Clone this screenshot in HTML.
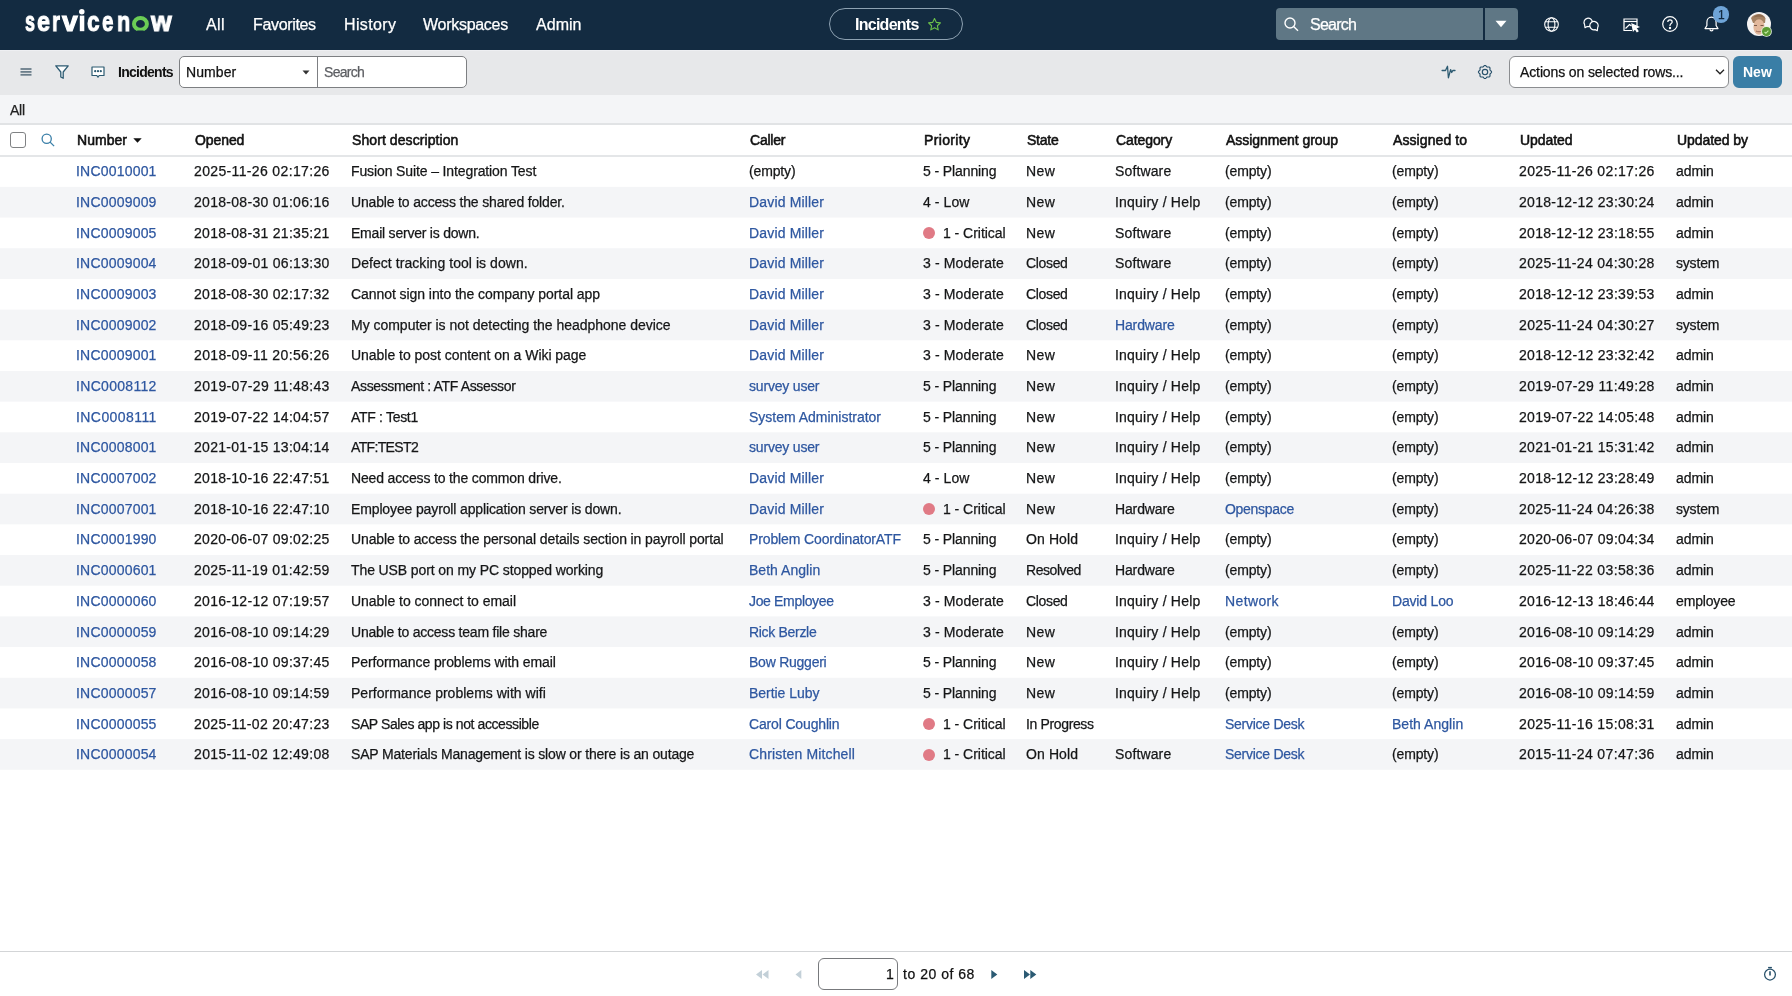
<!DOCTYPE html><html><head><meta charset="utf-8"><style>
html,body{margin:0;padding:0;}
body{width:1792px;height:996px;overflow:hidden;position:relative;background:#fff;font-family:"Liberation Sans",sans-serif;color:#151617;}
.t{position:absolute;white-space:pre;will-change:transform;-webkit-text-stroke:0.25px currentColor;}
.sb{-webkit-text-stroke:0.55px currentColor;}
.bd{-webkit-text-stroke:0;}
.b{position:absolute;box-sizing:border-box;}
svg{position:absolute;overflow:visible;}
</style></head><body>
<div class="b" style="left:0;top:0;width:1792px;height:50px;background:#132b41"></div>
<div class="t" style="left:24.75px;top:8.00px;font-size:28px;line-height:28px;font-weight:bold;color:#fff;-webkit-text-stroke:1.1px #fff;transform:scaleX(0.636);transform-origin:0 0">s</div>
<div class="t" style="left:36.85px;top:8.00px;font-size:28px;line-height:28px;font-weight:bold;color:#fff;-webkit-text-stroke:1.1px #fff;transform:scaleX(0.835);transform-origin:0 0">e</div>
<div class="t" style="left:52.45px;top:8.00px;font-size:28px;line-height:28px;font-weight:bold;color:#fff;-webkit-text-stroke:1.1px #fff;transform:scaleX(0.734);transform-origin:0 0">r</div>
<div class="t" style="left:62.25px;top:8.00px;font-size:28px;line-height:28px;font-weight:bold;color:#fff;-webkit-text-stroke:1.1px #fff;transform:scaleX(1.008);transform-origin:0 0">v</div>
<div class="t" style="left:86.55px;top:8.00px;font-size:28px;line-height:28px;font-weight:bold;color:#fff;-webkit-text-stroke:1.1px #fff;transform:scaleX(0.803);transform-origin:0 0">c</div>
<div class="t" style="left:102.25px;top:8.00px;font-size:28px;line-height:28px;font-weight:bold;color:#fff;-webkit-text-stroke:1.1px #fff;transform:scaleX(0.732);transform-origin:0 0">e</div>
<div class="t" style="left:116.95px;top:8.00px;font-size:28px;line-height:28px;font-weight:bold;color:#fff;-webkit-text-stroke:1.1px #fff;transform:scaleX(0.772);transform-origin:0 0">n</div>
<div class="t" style="left:150.53px;top:8.00px;font-size:28px;line-height:28px;font-weight:bold;color:#fff;-webkit-text-stroke:1.1px #fff;transform:scaleX(0.949);transform-origin:0 0">w</div>
<svg style="left:78px;top:8px" width="8" height="24" viewBox="0 0 8 24" fill="#fff"><circle cx="3.8" cy="3.8" r="2.75"/><rect x="1.8" y="7.6" width="4.5" height="15.6"/></svg>
<svg style="left:132px;top:15.6px" width="18" height="16" viewBox="0 0 18 16"><ellipse cx="8.45" cy="7.9" rx="6.45" ry="5.9" fill="none" stroke="#6bcd55" stroke-width="4"/><rect x="4.9" y="14.5" width="7.1" height="2" rx="0.8" fill="#132b41"/></svg>
<div class="t" style="left:205.80px;top:16.60px;font-size:16px;line-height:16px;letter-spacing:0.362px;color:#fff;">All</div>
<div class="t" style="left:252.70px;top:16.60px;font-size:16px;line-height:16px;letter-spacing:-0.337px;color:#fff;">Favorites</div>
<div class="t" style="left:343.60px;top:16.60px;font-size:16px;line-height:16px;letter-spacing:0.354px;color:#fff;">History</div>
<div class="t" style="left:423.40px;top:16.60px;font-size:16px;line-height:16px;letter-spacing:-0.281px;color:#fff;">Workspaces</div>
<div class="t" style="left:536.20px;top:16.60px;font-size:16px;line-height:16px;letter-spacing:0.035px;color:#fff;">Admin</div>
<div class="b" style="left:829px;top:8px;width:134px;height:32px;border:1px solid #8ea2b2;border-radius:16px"></div>
<div class="t bd" style="left:854.80px;top:16.50px;font-size:16px;line-height:16px;letter-spacing:-0.742px;font-weight:bold;color:#fff;">Incidents</div>
<svg style="left:927px;top:17px" width="15" height="15" viewBox="0 0 24 24"><path d="M12 2.5l2.9 6.1 6.6.8-4.9 4.6 1.3 6.6L12 17.3l-5.9 3.3 1.3-6.6-4.9-4.6 6.6-.8z" fill="none" stroke="#6cc24a" stroke-width="1.8" stroke-linejoin="round"/></svg>
<div class="b" style="left:1276px;top:8px;width:242px;height:32px;background:#5f7785;border-radius:4px"></div>
<div class="b" style="left:1483px;top:8px;width:1.5px;height:32px;background:#132b41"></div>
<svg style="left:1284px;top:17px" width="15" height="14" viewBox="0 0 15 14"><circle cx="6" cy="6" r="5" fill="none" stroke="#fff" stroke-width="1.4"/><path d="M9.6 9.6L14 13.8" stroke="#fff" stroke-width="1.4"/></svg>
<div class="t" style="left:1310.30px;top:16.75px;font-size:16px;line-height:16px;letter-spacing:-0.758px;color:#fff;">Search</div>
<svg style="left:1495px;top:20px" width="12" height="8" viewBox="0 0 12 8"><path d="M0.5 0.8h11L6 7.3z" fill="#fff"/></svg>
<svg style="left:1543.5px;top:16.5px" width="15" height="15" viewBox="0 0 15 15" fill="none" stroke="#fff" stroke-width="1.1"><circle cx="7.5" cy="7.5" r="6.8"/><ellipse cx="7.5" cy="7.5" rx="3.4" ry="6.8"/><path d="M1.3 4.8h12.4M1.3 10.2h12.4"/></svg>
<svg style="left:1583px;top:17.5px" width="17" height="14" viewBox="0 0 17 14" fill="none" stroke="#fff" stroke-width="1.2" stroke-linejoin="round"><path d="M4.11 8.46L2.0 9.7L1.56 6.5A4.2 4.2 0 1 1 4.11 8.46z"/><path d="M12.09 11.66L14.3 12.7L14.64 9.7A4.2 4.2 0 1 0 12.09 11.66z" fill="#132b41"/></svg>
<svg style="left:1623px;top:18px" width="17" height="15" viewBox="0 0 17 15" fill="none" stroke="#fff" stroke-width="1.2"><path d="M9 12.5H1V1h13v7"/><path d="M1 3.5h13"/><path d="M2.5 10.5l4-4 2 1.5"/><path d="M9 6l6.5 3-2.5 1 2 3-1 .7-2-3-1.7 2z" fill="#fff"/></svg>
<svg style="left:1662px;top:16px" width="16" height="16" viewBox="0 0 16 16" fill="none" stroke="#fff" stroke-width="1.2"><circle cx="8" cy="8" r="7.3"/><path d="M5.8 6.1c0-1.3 1-2.2 2.2-2.2s2.2.9 2.2 2.1c0 1.5-2.2 1.7-2.2 3.4v.6"/><circle cx="8" cy="12" r=".6" fill="#fff"/></svg>
<svg style="left:1704px;top:16px" width="15" height="16" viewBox="0 0 15 16" fill="none" stroke="#fff" stroke-width="1.2" stroke-linejoin="round"><path d="M7.5 1.2c-2.8 0-4.6 2.2-4.6 5v3.3L1 12.6h13l-1.9-3.1V6.2c0-2.8-1.8-5-4.6-5z"/><path d="M6 13.2c0 .9.7 1.6 1.5 1.6S9 14.1 9 13.2"/></svg>
<div class="b" style="left:1712.5px;top:6px;width:16.5px;height:16.5px;border-radius:50%;background:#6fa5d8"></div>
<div class="t" style="left:1717.50px;top:9.30px;font-size:12px;line-height:12px;letter-spacing:0.000px;color:#132b41;">1</div>
<svg style="left:1747px;top:12px" width="24" height="24" viewBox="0 0 24 24"><defs><clipPath id="av"><circle cx="12" cy="12" r="12"/></clipPath></defs><g clip-path="url(#av)"><rect width="24" height="24" fill="#f6f4f3"/><path d="M4 6c2-3 5-4 8-4s5.5 1.5 6.5 4.5L18 11H6z" fill="#a58263"/><ellipse cx="12" cy="15" rx="5.6" ry="7.8" fill="#e2b89c"/><path d="M7 13.5h3M13.5 13.5h3" stroke="#7a5a48" stroke-width="1"/><path d="M9 19c1.5 1 4.5 1 6 0" stroke="#9a6a58" stroke-width="1" fill="none"/><path d="M6.5 5.5c1.5-2 3.5-3 5.5-3s4.5 1 5.8 3.5c-1.5-1-3.5-1.3-5.8-1.3S8 5 6.5 5.5z" fill="#8e6c50"/></g></svg>
<div class="b" style="left:1762.4px;top:27.4px;width:8.4px;height:8.4px;border-radius:50%;background:#5d9c34;box-shadow:0 0 0 0.8px #e8f3e0"></div>
<svg style="left:1764.2px;top:29.6px" width="5" height="4" viewBox="0 0 5 4"><path d="M0.6 2l1.3 1.3L4.4 0.7" fill="none" stroke="#c9f0a8" stroke-width="1.1"/></svg>
<div class="b" style="left:0;top:50px;width:1792px;height:45px;background:#e7e8ea"></div>
<div class="b" style="left:0;top:50px;width:1792px;height:1px;background:#eeeff2"></div>
<svg style="left:20px;top:68px" width="12" height="9" viewBox="0 0 12 9" fill="#6b7e8b"><rect x="0.5" y="0.1" width="11" height="1.8"/><rect x="0.5" y="3.0" width="11" height="1.8"/><rect x="0.5" y="5.9" width="11" height="1.8"/></svg>
<svg style="left:55px;top:65px" width="14" height="14" viewBox="0 0 14 14" fill="#fafcfd" stroke="#2c5a71" stroke-width="1.3" stroke-linejoin="round"><path d="M0.8 0.8h12.4L8.2 7v6.3L5.8 12V7z"/></svg>
<svg style="left:91px;top:66px" width="14" height="13" viewBox="0 0 14 13" fill="#fff" stroke="#2c5a71" stroke-width="1.2" stroke-linejoin="round"><path d="M1 1h12v8.5H8.2L7 11.2 5.8 9.5H1z"/><circle cx="4.2" cy="5.2" r=".5" fill="#2c5a71"/><circle cx="7" cy="5.2" r=".5" fill="#2c5a71"/><circle cx="9.8" cy="5.2" r=".5" fill="#2c5a71"/></svg>
<div class="t bd" style="left:118.40px;top:64.80px;font-size:14px;line-height:14px;letter-spacing:-0.732px;font-weight:bold;color:#111;">Incidents</div>
<div class="b" style="left:179px;top:56px;width:288px;height:32px;border:1px solid #7d7f82;border-radius:5px;background:#fff"></div>
<div class="b" style="left:317px;top:56px;width:1px;height:32px;background:#7d7f82"></div>
<div class="t" style="left:186.40px;top:65.20px;font-size:14px;line-height:14px;letter-spacing:0.080px;color:#111;">Number</div>
<svg style="left:302px;top:70px" width="8" height="5" viewBox="0 0 8 5"><path d="M0.5 0.5h7L4 4.5z" fill="#333"/></svg>
<div class="t" style="left:324.00px;top:65.20px;font-size:14px;line-height:14px;letter-spacing:-0.690px;color:#5c5e62;">Search</div>
<svg style="left:1441px;top:65px" width="15" height="14" viewBox="0 0 15 14" fill="none" stroke="#2c5a71" stroke-width="1.3" stroke-linejoin="round" stroke-linecap="round"><path d="M1.1 5.5H4.5L6.5 1.3L7.4 12.8L9.6 4.6L10.7 7.5L11.8 5.5H14"/></svg>
<svg style="left:1476.7px;top:64px" width="16" height="16" viewBox="0 0 16 16" fill="none" stroke="#27506a" stroke-width="1.15"><path d="M14.55 8.00 L14.52 8.26 L14.43 8.51 L14.28 8.74 L14.09 8.97 L13.88 9.17 L13.67 9.36 L13.46 9.54 L13.28 9.72 L13.14 9.90 L13.04 10.09 L12.97 10.29 L12.95 10.52 L12.95 10.77 L12.97 11.05 L12.99 11.33 L12.99 11.63 L12.97 11.91 L12.90 12.19 L12.79 12.43 L12.63 12.63 L12.43 12.79 L12.19 12.90 L11.91 12.97 L11.63 12.99 L11.33 12.99 L11.05 12.97 L10.77 12.95 L10.52 12.95 L10.29 12.97 L10.09 13.04 L9.90 13.14 L9.72 13.28 L9.54 13.46 L9.36 13.67 L9.17 13.88 L8.97 14.09 L8.74 14.28 L8.51 14.43 L8.26 14.52 L8.00 14.55 L7.74 14.52 L7.49 14.43 L7.26 14.28 L7.03 14.09 L6.83 13.88 L6.64 13.67 L6.46 13.46 L6.28 13.28 L6.10 13.14 L5.91 13.04 L5.71 12.97 L5.48 12.95 L5.23 12.95 L4.95 12.97 L4.67 12.99 L4.37 12.99 L4.09 12.97 L3.81 12.90 L3.57 12.79 L3.37 12.63 L3.21 12.43 L3.10 12.19 L3.03 11.91 L3.01 11.63 L3.01 11.33 L3.03 11.05 L3.05 10.77 L3.05 10.52 L3.03 10.29 L2.96 10.09 L2.86 9.90 L2.72 9.72 L2.54 9.54 L2.33 9.36 L2.12 9.17 L1.91 8.97 L1.72 8.74 L1.57 8.51 L1.48 8.26 L1.45 8.00 L1.48 7.74 L1.57 7.49 L1.72 7.26 L1.91 7.03 L2.12 6.83 L2.33 6.64 L2.54 6.46 L2.72 6.28 L2.86 6.10 L2.96 5.91 L3.03 5.71 L3.05 5.48 L3.05 5.23 L3.03 4.95 L3.01 4.67 L3.01 4.37 L3.03 4.09 L3.10 3.81 L3.21 3.57 L3.37 3.37 L3.57 3.21 L3.81 3.10 L4.09 3.03 L4.37 3.01 L4.67 3.01 L4.95 3.03 L5.23 3.05 L5.48 3.05 L5.71 3.03 L5.91 2.96 L6.10 2.86 L6.28 2.72 L6.46 2.54 L6.64 2.33 L6.83 2.12 L7.03 1.91 L7.26 1.72 L7.49 1.57 L7.74 1.48 L8.00 1.45 L8.26 1.48 L8.51 1.57 L8.74 1.72 L8.97 1.91 L9.17 2.12 L9.36 2.33 L9.54 2.54 L9.72 2.72 L9.90 2.86 L10.09 2.96 L10.29 3.03 L10.52 3.05 L10.77 3.05 L11.05 3.03 L11.33 3.01 L11.63 3.01 L11.91 3.03 L12.19 3.10 L12.43 3.21 L12.63 3.37 L12.79 3.57 L12.90 3.81 L12.97 4.09 L12.99 4.37 L12.99 4.67 L12.97 4.95 L12.95 5.23 L12.95 5.48 L12.97 5.71 L13.04 5.91 L13.14 6.10 L13.28 6.28 L13.46 6.46 L13.67 6.64 L13.88 6.83 L14.09 7.03 L14.28 7.26 L14.43 7.49 L14.52 7.74z" stroke-linejoin="round"/><circle cx="8" cy="8" r="2.7"/></svg>
<div class="b" style="left:1508.5px;top:56px;width:220px;height:32px;border:1px solid #8b8d90;border-radius:6px;background:#fff"></div>
<div class="t" style="left:1519.90px;top:65.30px;font-size:14px;line-height:14px;letter-spacing:-0.117px;color:#111;">Actions on selected rows...</div>
<svg style="left:1715px;top:69px" width="10" height="6" viewBox="0 0 10 6" fill="none" stroke="#222" stroke-width="1.3"><path d="M1 0.8l4 4 4-4"/></svg>
<div class="b" style="left:1732.5px;top:56px;width:49.5px;height:32px;border-radius:6px;background:#3a7ea6"></div>
<div class="t bd" style="left:1743.00px;top:64.70px;font-size:14px;line-height:14px;letter-spacing:-0.006px;font-weight:bold;color:#fff;">New</div>
<div class="b" style="left:0;top:95px;width:1792px;height:28px;background:#f4f5f7"></div>
<div class="b" style="left:0;top:123px;width:1792px;height:2px;background:#e1e3e5"></div>
<div class="t" style="left:10.00px;top:102.50px;font-size:14px;line-height:14px;letter-spacing:-0.277px;color:#222;">All</div>
<div class="b" style="left:0;top:155px;width:1792px;height:2px;background:#e4e6e8"></div>
<div class="b" style="left:10px;top:132px;width:16px;height:16px;border:1.5px solid #808284;border-radius:3px;background:#fff"></div>
<svg style="left:41px;top:133px" width="14" height="14" viewBox="0 0 14 14" fill="none" stroke="#3a7fa8" stroke-width="1.3"><circle cx="5.7" cy="5.7" r="4.6"/><path d="M9.1 9.1l4 4"/></svg>
<div class="t sb" style="left:76.50px;top:132.90px;font-size:14px;line-height:14px;letter-spacing:0.040px;color:#111;">Number</div>
<div class="t sb" style="left:194.70px;top:132.90px;font-size:14px;line-height:14px;letter-spacing:-0.085px;color:#111;">Opened</div>
<div class="t sb" style="left:351.60px;top:132.90px;font-size:14px;line-height:14px;letter-spacing:0.078px;color:#111;">Short description</div>
<div class="t sb" style="left:749.70px;top:132.90px;font-size:14px;line-height:14px;letter-spacing:-0.214px;color:#111;">Caller</div>
<div class="t sb" style="left:924.20px;top:132.90px;font-size:14px;line-height:14px;letter-spacing:0.349px;color:#111;">Priority</div>
<div class="t sb" style="left:1026.60px;top:132.90px;font-size:14px;line-height:14px;letter-spacing:-0.257px;color:#111;">State</div>
<div class="t sb" style="left:1115.70px;top:132.90px;font-size:14px;line-height:14px;letter-spacing:-0.087px;color:#111;">Category</div>
<div class="t sb" style="left:1226.00px;top:132.90px;font-size:14px;line-height:14px;letter-spacing:-0.056px;color:#111;">Assignment group</div>
<div class="t sb" style="left:1392.90px;top:132.90px;font-size:14px;line-height:14px;letter-spacing:0.095px;color:#111;">Assigned to</div>
<div class="t sb" style="left:1519.90px;top:132.90px;font-size:14px;line-height:14px;letter-spacing:-0.056px;color:#111;">Updated</div>
<div class="t sb" style="left:1676.80px;top:132.90px;font-size:14px;line-height:14px;letter-spacing:-0.079px;color:#111;">Updated by</div>
<svg style="left:133px;top:138px" width="9" height="5" viewBox="0 0 9 5"><path d="M0.3 0.2h8.4L4.5 4.8z" fill="#111"/></svg>
<svg style="left:0;top:0" width="1792" height="996" fill="#f4f5f7"><rect x="0" y="186.88" width="1792" height="30.68"/><rect x="0" y="248.24" width="1792" height="30.68"/><rect x="0" y="309.60" width="1792" height="30.68"/><rect x="0" y="370.96" width="1792" height="30.68"/><rect x="0" y="432.32" width="1792" height="30.68"/><rect x="0" y="493.68" width="1792" height="30.68"/><rect x="0" y="555.04" width="1792" height="30.68"/><rect x="0" y="616.40" width="1792" height="30.68"/><rect x="0" y="677.76" width="1792" height="30.68"/><rect x="0" y="739.12" width="1792" height="30.68"/></svg>
<div class="t" style="left:76.10px;top:164.30px;font-size:14px;line-height:14px;letter-spacing:0.199px;color:#2e57a0;">INC0010001</div>
<div class="t" style="left:194.00px;top:164.30px;font-size:14px;line-height:14px;letter-spacing:0.354px;">2025-11-26 02:17:26</div>
<div class="t" style="left:350.90px;top:164.30px;font-size:14px;line-height:14px;letter-spacing:-0.119px;">Fusion Suite – Integration Test</div>
<div class="t" style="left:748.80px;top:164.30px;font-size:14px;line-height:14px;letter-spacing:-0.141px;">(empty)</div>
<div class="t" style="left:923.00px;top:164.30px;font-size:14px;line-height:14px;letter-spacing:-0.102px;">5 - Planning</div>
<div class="t" style="left:1026.20px;top:164.30px;font-size:14px;line-height:14px;letter-spacing:0.429px;">New</div>
<div class="t" style="left:1115.00px;top:164.30px;font-size:14px;line-height:14px;letter-spacing:0.137px;">Software</div>
<div class="t" style="left:1225.30px;top:164.30px;font-size:14px;line-height:14px;letter-spacing:-0.141px;">(empty)</div>
<div class="t" style="left:1392.20px;top:164.30px;font-size:14px;line-height:14px;letter-spacing:-0.141px;">(empty)</div>
<div class="t" style="left:1519.20px;top:164.30px;font-size:14px;line-height:14px;letter-spacing:0.354px;">2025-11-26 02:17:26</div>
<div class="t" style="left:1676.10px;top:164.30px;font-size:14px;line-height:14px;letter-spacing:-0.059px;">admin</div>
<div class="t" style="left:76.10px;top:194.98px;font-size:14px;line-height:14px;letter-spacing:0.199px;color:#2e57a0;">INC0009009</div>
<div class="t" style="left:194.00px;top:194.98px;font-size:14px;line-height:14px;letter-spacing:0.296px;">2018-08-30 01:06:16</div>
<div class="t" style="left:350.90px;top:194.98px;font-size:14px;line-height:14px;letter-spacing:-0.164px;">Unable to access the shared folder.</div>
<div class="t" style="left:748.80px;top:194.98px;font-size:14px;line-height:14px;letter-spacing:0.162px;color:#2e57a0;">David Miller</div>
<div class="t" style="left:923.00px;top:194.98px;font-size:14px;line-height:14px;letter-spacing:0.075px;">4 - Low</div>
<div class="t" style="left:1026.20px;top:194.98px;font-size:14px;line-height:14px;letter-spacing:0.429px;">New</div>
<div class="t" style="left:1115.00px;top:194.98px;font-size:14px;line-height:14px;letter-spacing:0.216px;">Inquiry / Help</div>
<div class="t" style="left:1225.30px;top:194.98px;font-size:14px;line-height:14px;letter-spacing:-0.141px;">(empty)</div>
<div class="t" style="left:1392.20px;top:194.98px;font-size:14px;line-height:14px;letter-spacing:-0.141px;">(empty)</div>
<div class="t" style="left:1519.20px;top:194.98px;font-size:14px;line-height:14px;letter-spacing:0.296px;">2018-12-12 23:30:24</div>
<div class="t" style="left:1676.10px;top:194.98px;font-size:14px;line-height:14px;letter-spacing:-0.059px;">admin</div>
<div class="t" style="left:76.10px;top:225.66px;font-size:14px;line-height:14px;letter-spacing:0.199px;color:#2e57a0;">INC0009005</div>
<div class="t" style="left:194.00px;top:225.66px;font-size:14px;line-height:14px;letter-spacing:0.296px;">2018-08-31 21:35:21</div>
<div class="t" style="left:350.90px;top:225.66px;font-size:14px;line-height:14px;letter-spacing:-0.217px;">Email server is down.</div>
<div class="t" style="left:748.80px;top:225.66px;font-size:14px;line-height:14px;letter-spacing:0.162px;color:#2e57a0;">David Miller</div>
<div class="b" style="left:923.4px;top:227.06px;width:12.1px;height:12.1px;border-radius:50%;background:#e07a85"></div>
<div class="t" style="left:942.50px;top:225.66px;font-size:14px;line-height:14px;letter-spacing:-0.029px;">1 - Critical</div>
<div class="t" style="left:1026.20px;top:225.66px;font-size:14px;line-height:14px;letter-spacing:0.429px;">New</div>
<div class="t" style="left:1115.00px;top:225.66px;font-size:14px;line-height:14px;letter-spacing:0.137px;">Software</div>
<div class="t" style="left:1225.30px;top:225.66px;font-size:14px;line-height:14px;letter-spacing:-0.141px;">(empty)</div>
<div class="t" style="left:1392.20px;top:225.66px;font-size:14px;line-height:14px;letter-spacing:-0.141px;">(empty)</div>
<div class="t" style="left:1519.20px;top:225.66px;font-size:14px;line-height:14px;letter-spacing:0.296px;">2018-12-12 23:18:55</div>
<div class="t" style="left:1676.10px;top:225.66px;font-size:14px;line-height:14px;letter-spacing:-0.059px;">admin</div>
<div class="t" style="left:76.10px;top:256.34px;font-size:14px;line-height:14px;letter-spacing:0.199px;color:#2e57a0;">INC0009004</div>
<div class="t" style="left:194.00px;top:256.34px;font-size:14px;line-height:14px;letter-spacing:0.296px;">2018-09-01 06:13:30</div>
<div class="t" style="left:350.90px;top:256.34px;font-size:14px;line-height:14px;letter-spacing:0.058px;">Defect tracking tool is down.</div>
<div class="t" style="left:748.80px;top:256.34px;font-size:14px;line-height:14px;letter-spacing:0.162px;color:#2e57a0;">David Miller</div>
<div class="t" style="left:923.00px;top:256.34px;font-size:14px;line-height:14px;letter-spacing:0.139px;">3 - Moderate</div>
<div class="t" style="left:1026.20px;top:256.34px;font-size:14px;line-height:14px;letter-spacing:-0.336px;">Closed</div>
<div class="t" style="left:1115.00px;top:256.34px;font-size:14px;line-height:14px;letter-spacing:0.137px;">Software</div>
<div class="t" style="left:1225.30px;top:256.34px;font-size:14px;line-height:14px;letter-spacing:-0.141px;">(empty)</div>
<div class="t" style="left:1392.20px;top:256.34px;font-size:14px;line-height:14px;letter-spacing:-0.141px;">(empty)</div>
<div class="t" style="left:1519.20px;top:256.34px;font-size:14px;line-height:14px;letter-spacing:0.354px;">2025-11-24 04:30:28</div>
<div class="t" style="left:1676.10px;top:256.34px;font-size:14px;line-height:14px;letter-spacing:-0.188px;">system</div>
<div class="t" style="left:76.10px;top:287.02px;font-size:14px;line-height:14px;letter-spacing:0.199px;color:#2e57a0;">INC0009003</div>
<div class="t" style="left:194.00px;top:287.02px;font-size:14px;line-height:14px;letter-spacing:0.296px;">2018-08-30 02:17:32</div>
<div class="t" style="left:350.90px;top:287.02px;font-size:14px;line-height:14px;letter-spacing:-0.063px;">Cannot sign into the company portal app</div>
<div class="t" style="left:748.80px;top:287.02px;font-size:14px;line-height:14px;letter-spacing:0.162px;color:#2e57a0;">David Miller</div>
<div class="t" style="left:923.00px;top:287.02px;font-size:14px;line-height:14px;letter-spacing:0.139px;">3 - Moderate</div>
<div class="t" style="left:1026.20px;top:287.02px;font-size:14px;line-height:14px;letter-spacing:-0.336px;">Closed</div>
<div class="t" style="left:1115.00px;top:287.02px;font-size:14px;line-height:14px;letter-spacing:0.216px;">Inquiry / Help</div>
<div class="t" style="left:1225.30px;top:287.02px;font-size:14px;line-height:14px;letter-spacing:-0.141px;">(empty)</div>
<div class="t" style="left:1392.20px;top:287.02px;font-size:14px;line-height:14px;letter-spacing:-0.141px;">(empty)</div>
<div class="t" style="left:1519.20px;top:287.02px;font-size:14px;line-height:14px;letter-spacing:0.296px;">2018-12-12 23:39:53</div>
<div class="t" style="left:1676.10px;top:287.02px;font-size:14px;line-height:14px;letter-spacing:-0.059px;">admin</div>
<div class="t" style="left:76.10px;top:317.70px;font-size:14px;line-height:14px;letter-spacing:0.199px;color:#2e57a0;">INC0009002</div>
<div class="t" style="left:194.00px;top:317.70px;font-size:14px;line-height:14px;letter-spacing:0.296px;">2018-09-16 05:49:23</div>
<div class="t" style="left:350.90px;top:317.70px;font-size:14px;line-height:14px;letter-spacing:-0.022px;">My computer is not detecting the headphone device</div>
<div class="t" style="left:748.80px;top:317.70px;font-size:14px;line-height:14px;letter-spacing:0.162px;color:#2e57a0;">David Miller</div>
<div class="t" style="left:923.00px;top:317.70px;font-size:14px;line-height:14px;letter-spacing:0.139px;">3 - Moderate</div>
<div class="t" style="left:1026.20px;top:317.70px;font-size:14px;line-height:14px;letter-spacing:-0.336px;">Closed</div>
<div class="t" style="left:1115.00px;top:317.70px;font-size:14px;line-height:14px;letter-spacing:-0.141px;color:#2e57a0;">Hardware</div>
<div class="t" style="left:1225.30px;top:317.70px;font-size:14px;line-height:14px;letter-spacing:-0.141px;">(empty)</div>
<div class="t" style="left:1392.20px;top:317.70px;font-size:14px;line-height:14px;letter-spacing:-0.141px;">(empty)</div>
<div class="t" style="left:1519.20px;top:317.70px;font-size:14px;line-height:14px;letter-spacing:0.354px;">2025-11-24 04:30:27</div>
<div class="t" style="left:1676.10px;top:317.70px;font-size:14px;line-height:14px;letter-spacing:-0.188px;">system</div>
<div class="t" style="left:76.10px;top:348.38px;font-size:14px;line-height:14px;letter-spacing:0.199px;color:#2e57a0;">INC0009001</div>
<div class="t" style="left:194.00px;top:348.38px;font-size:14px;line-height:14px;letter-spacing:0.354px;">2018-09-11 20:56:26</div>
<div class="t" style="left:350.90px;top:348.38px;font-size:14px;line-height:14px;letter-spacing:-0.033px;">Unable to post content on a Wiki page</div>
<div class="t" style="left:748.80px;top:348.38px;font-size:14px;line-height:14px;letter-spacing:0.162px;color:#2e57a0;">David Miller</div>
<div class="t" style="left:923.00px;top:348.38px;font-size:14px;line-height:14px;letter-spacing:0.139px;">3 - Moderate</div>
<div class="t" style="left:1026.20px;top:348.38px;font-size:14px;line-height:14px;letter-spacing:0.429px;">New</div>
<div class="t" style="left:1115.00px;top:348.38px;font-size:14px;line-height:14px;letter-spacing:0.216px;">Inquiry / Help</div>
<div class="t" style="left:1225.30px;top:348.38px;font-size:14px;line-height:14px;letter-spacing:-0.141px;">(empty)</div>
<div class="t" style="left:1392.20px;top:348.38px;font-size:14px;line-height:14px;letter-spacing:-0.141px;">(empty)</div>
<div class="t" style="left:1519.20px;top:348.38px;font-size:14px;line-height:14px;letter-spacing:0.296px;">2018-12-12 23:32:42</div>
<div class="t" style="left:1676.10px;top:348.38px;font-size:14px;line-height:14px;letter-spacing:-0.059px;">admin</div>
<div class="t" style="left:76.10px;top:379.06px;font-size:14px;line-height:14px;letter-spacing:0.314px;color:#2e57a0;">INC0008112</div>
<div class="t" style="left:194.00px;top:379.06px;font-size:14px;line-height:14px;letter-spacing:0.354px;">2019-07-29 11:48:43</div>
<div class="t" style="left:350.90px;top:379.06px;font-size:14px;line-height:14px;letter-spacing:-0.351px;">Assessment : ATF Assessor</div>
<div class="t" style="left:748.80px;top:379.06px;font-size:14px;line-height:14px;letter-spacing:-0.185px;color:#2e57a0;">survey user</div>
<div class="t" style="left:923.00px;top:379.06px;font-size:14px;line-height:14px;letter-spacing:-0.102px;">5 - Planning</div>
<div class="t" style="left:1026.20px;top:379.06px;font-size:14px;line-height:14px;letter-spacing:0.429px;">New</div>
<div class="t" style="left:1115.00px;top:379.06px;font-size:14px;line-height:14px;letter-spacing:0.216px;">Inquiry / Help</div>
<div class="t" style="left:1225.30px;top:379.06px;font-size:14px;line-height:14px;letter-spacing:-0.141px;">(empty)</div>
<div class="t" style="left:1392.20px;top:379.06px;font-size:14px;line-height:14px;letter-spacing:-0.141px;">(empty)</div>
<div class="t" style="left:1519.20px;top:379.06px;font-size:14px;line-height:14px;letter-spacing:0.354px;">2019-07-29 11:49:28</div>
<div class="t" style="left:1676.10px;top:379.06px;font-size:14px;line-height:14px;letter-spacing:-0.059px;">admin</div>
<div class="t" style="left:76.10px;top:409.74px;font-size:14px;line-height:14px;letter-spacing:0.429px;color:#2e57a0;">INC0008111</div>
<div class="t" style="left:194.00px;top:409.74px;font-size:14px;line-height:14px;letter-spacing:0.296px;">2019-07-22 14:04:57</div>
<div class="t" style="left:350.90px;top:409.74px;font-size:14px;line-height:14px;letter-spacing:-0.308px;">ATF : Test1</div>
<div class="t" style="left:748.80px;top:409.74px;font-size:14px;line-height:14px;letter-spacing:-0.014px;color:#2e57a0;">System Administrator</div>
<div class="t" style="left:923.00px;top:409.74px;font-size:14px;line-height:14px;letter-spacing:-0.102px;">5 - Planning</div>
<div class="t" style="left:1026.20px;top:409.74px;font-size:14px;line-height:14px;letter-spacing:0.429px;">New</div>
<div class="t" style="left:1115.00px;top:409.74px;font-size:14px;line-height:14px;letter-spacing:0.216px;">Inquiry / Help</div>
<div class="t" style="left:1225.30px;top:409.74px;font-size:14px;line-height:14px;letter-spacing:-0.141px;">(empty)</div>
<div class="t" style="left:1392.20px;top:409.74px;font-size:14px;line-height:14px;letter-spacing:-0.141px;">(empty)</div>
<div class="t" style="left:1519.20px;top:409.74px;font-size:14px;line-height:14px;letter-spacing:0.296px;">2019-07-22 14:05:48</div>
<div class="t" style="left:1676.10px;top:409.74px;font-size:14px;line-height:14px;letter-spacing:-0.059px;">admin</div>
<div class="t" style="left:76.10px;top:440.42px;font-size:14px;line-height:14px;letter-spacing:0.199px;color:#2e57a0;">INC0008001</div>
<div class="t" style="left:194.00px;top:440.42px;font-size:14px;line-height:14px;letter-spacing:0.296px;">2021-01-15 13:04:14</div>
<div class="t" style="left:350.90px;top:440.42px;font-size:14px;line-height:14px;letter-spacing:-0.644px;">ATF:TEST2</div>
<div class="t" style="left:748.80px;top:440.42px;font-size:14px;line-height:14px;letter-spacing:-0.185px;color:#2e57a0;">survey user</div>
<div class="t" style="left:923.00px;top:440.42px;font-size:14px;line-height:14px;letter-spacing:-0.102px;">5 - Planning</div>
<div class="t" style="left:1026.20px;top:440.42px;font-size:14px;line-height:14px;letter-spacing:0.429px;">New</div>
<div class="t" style="left:1115.00px;top:440.42px;font-size:14px;line-height:14px;letter-spacing:0.216px;">Inquiry / Help</div>
<div class="t" style="left:1225.30px;top:440.42px;font-size:14px;line-height:14px;letter-spacing:-0.141px;">(empty)</div>
<div class="t" style="left:1392.20px;top:440.42px;font-size:14px;line-height:14px;letter-spacing:-0.141px;">(empty)</div>
<div class="t" style="left:1519.20px;top:440.42px;font-size:14px;line-height:14px;letter-spacing:0.296px;">2021-01-21 15:31:42</div>
<div class="t" style="left:1676.10px;top:440.42px;font-size:14px;line-height:14px;letter-spacing:-0.059px;">admin</div>
<div class="t" style="left:76.10px;top:471.10px;font-size:14px;line-height:14px;letter-spacing:0.199px;color:#2e57a0;">INC0007002</div>
<div class="t" style="left:194.00px;top:471.10px;font-size:14px;line-height:14px;letter-spacing:0.296px;">2018-10-16 22:47:51</div>
<div class="t" style="left:350.90px;top:471.10px;font-size:14px;line-height:14px;letter-spacing:-0.153px;">Need access to the common drive.</div>
<div class="t" style="left:748.80px;top:471.10px;font-size:14px;line-height:14px;letter-spacing:0.162px;color:#2e57a0;">David Miller</div>
<div class="t" style="left:923.00px;top:471.10px;font-size:14px;line-height:14px;letter-spacing:0.075px;">4 - Low</div>
<div class="t" style="left:1026.20px;top:471.10px;font-size:14px;line-height:14px;letter-spacing:0.429px;">New</div>
<div class="t" style="left:1115.00px;top:471.10px;font-size:14px;line-height:14px;letter-spacing:0.216px;">Inquiry / Help</div>
<div class="t" style="left:1225.30px;top:471.10px;font-size:14px;line-height:14px;letter-spacing:-0.141px;">(empty)</div>
<div class="t" style="left:1392.20px;top:471.10px;font-size:14px;line-height:14px;letter-spacing:-0.141px;">(empty)</div>
<div class="t" style="left:1519.20px;top:471.10px;font-size:14px;line-height:14px;letter-spacing:0.296px;">2018-12-12 23:28:49</div>
<div class="t" style="left:1676.10px;top:471.10px;font-size:14px;line-height:14px;letter-spacing:-0.059px;">admin</div>
<div class="t" style="left:76.10px;top:501.78px;font-size:14px;line-height:14px;letter-spacing:0.199px;color:#2e57a0;">INC0007001</div>
<div class="t" style="left:194.00px;top:501.78px;font-size:14px;line-height:14px;letter-spacing:0.296px;">2018-10-16 22:47:10</div>
<div class="t" style="left:350.90px;top:501.78px;font-size:14px;line-height:14px;letter-spacing:-0.131px;">Employee payroll application server is down.</div>
<div class="t" style="left:748.80px;top:501.78px;font-size:14px;line-height:14px;letter-spacing:0.162px;color:#2e57a0;">David Miller</div>
<div class="b" style="left:923.4px;top:503.18px;width:12.1px;height:12.1px;border-radius:50%;background:#e07a85"></div>
<div class="t" style="left:942.50px;top:501.78px;font-size:14px;line-height:14px;letter-spacing:-0.029px;">1 - Critical</div>
<div class="t" style="left:1026.20px;top:501.78px;font-size:14px;line-height:14px;letter-spacing:0.429px;">New</div>
<div class="t" style="left:1115.00px;top:501.78px;font-size:14px;line-height:14px;letter-spacing:-0.141px;">Hardware</div>
<div class="t" style="left:1225.30px;top:501.78px;font-size:14px;line-height:14px;letter-spacing:-0.289px;color:#2e57a0;">Openspace</div>
<div class="t" style="left:1392.20px;top:501.78px;font-size:14px;line-height:14px;letter-spacing:-0.141px;">(empty)</div>
<div class="t" style="left:1519.20px;top:501.78px;font-size:14px;line-height:14px;letter-spacing:0.354px;">2025-11-24 04:26:38</div>
<div class="t" style="left:1676.10px;top:501.78px;font-size:14px;line-height:14px;letter-spacing:-0.188px;">system</div>
<div class="t" style="left:76.10px;top:532.46px;font-size:14px;line-height:14px;letter-spacing:0.199px;color:#2e57a0;">INC0001990</div>
<div class="t" style="left:194.00px;top:532.46px;font-size:14px;line-height:14px;letter-spacing:0.296px;">2020-06-07 09:02:25</div>
<div class="t" style="left:350.90px;top:532.46px;font-size:14px;line-height:14px;letter-spacing:-0.114px;">Unable to access the personal details section in payroll portal</div>
<div class="t" style="left:748.80px;top:532.46px;font-size:14px;line-height:14px;letter-spacing:-0.123px;color:#2e57a0;">Problem CoordinatorATF</div>
<div class="t" style="left:923.00px;top:532.46px;font-size:14px;line-height:14px;letter-spacing:-0.102px;">5 - Planning</div>
<div class="t" style="left:1026.20px;top:532.46px;font-size:14px;line-height:14px;letter-spacing:0.108px;">On Hold</div>
<div class="t" style="left:1115.00px;top:532.46px;font-size:14px;line-height:14px;letter-spacing:0.216px;">Inquiry / Help</div>
<div class="t" style="left:1225.30px;top:532.46px;font-size:14px;line-height:14px;letter-spacing:-0.141px;">(empty)</div>
<div class="t" style="left:1392.20px;top:532.46px;font-size:14px;line-height:14px;letter-spacing:-0.141px;">(empty)</div>
<div class="t" style="left:1519.20px;top:532.46px;font-size:14px;line-height:14px;letter-spacing:0.296px;">2020-06-07 09:04:34</div>
<div class="t" style="left:1676.10px;top:532.46px;font-size:14px;line-height:14px;letter-spacing:-0.059px;">admin</div>
<div class="t" style="left:76.10px;top:563.14px;font-size:14px;line-height:14px;letter-spacing:0.199px;color:#2e57a0;">INC0000601</div>
<div class="t" style="left:194.00px;top:563.14px;font-size:14px;line-height:14px;letter-spacing:0.354px;">2025-11-19 01:42:59</div>
<div class="t" style="left:350.90px;top:563.14px;font-size:14px;line-height:14px;letter-spacing:-0.103px;">The USB port on my PC stopped working</div>
<div class="t" style="left:748.80px;top:563.14px;font-size:14px;line-height:14px;letter-spacing:0.036px;color:#2e57a0;">Beth Anglin</div>
<div class="t" style="left:923.00px;top:563.14px;font-size:14px;line-height:14px;letter-spacing:-0.102px;">5 - Planning</div>
<div class="t" style="left:1026.20px;top:563.14px;font-size:14px;line-height:14px;letter-spacing:-0.438px;">Resolved</div>
<div class="t" style="left:1115.00px;top:563.14px;font-size:14px;line-height:14px;letter-spacing:-0.141px;">Hardware</div>
<div class="t" style="left:1225.30px;top:563.14px;font-size:14px;line-height:14px;letter-spacing:-0.141px;">(empty)</div>
<div class="t" style="left:1392.20px;top:563.14px;font-size:14px;line-height:14px;letter-spacing:-0.141px;">(empty)</div>
<div class="t" style="left:1519.20px;top:563.14px;font-size:14px;line-height:14px;letter-spacing:0.354px;">2025-11-22 03:58:36</div>
<div class="t" style="left:1676.10px;top:563.14px;font-size:14px;line-height:14px;letter-spacing:-0.059px;">admin</div>
<div class="t" style="left:76.10px;top:593.82px;font-size:14px;line-height:14px;letter-spacing:0.199px;color:#2e57a0;">INC0000060</div>
<div class="t" style="left:194.00px;top:593.82px;font-size:14px;line-height:14px;letter-spacing:0.296px;">2016-12-12 07:19:57</div>
<div class="t" style="left:350.90px;top:593.82px;font-size:14px;line-height:14px;letter-spacing:-0.030px;">Unable to connect to email</div>
<div class="t" style="left:748.80px;top:593.82px;font-size:14px;line-height:14px;letter-spacing:-0.338px;color:#2e57a0;">Joe Employee</div>
<div class="t" style="left:923.00px;top:593.82px;font-size:14px;line-height:14px;letter-spacing:0.139px;">3 - Moderate</div>
<div class="t" style="left:1026.20px;top:593.82px;font-size:14px;line-height:14px;letter-spacing:-0.336px;">Closed</div>
<div class="t" style="left:1115.00px;top:593.82px;font-size:14px;line-height:14px;letter-spacing:0.216px;">Inquiry / Help</div>
<div class="t" style="left:1225.30px;top:593.82px;font-size:14px;line-height:14px;letter-spacing:0.370px;color:#2e57a0;">Network</div>
<div class="t" style="left:1392.20px;top:593.82px;font-size:14px;line-height:14px;letter-spacing:-0.180px;color:#2e57a0;">David Loo</div>
<div class="t" style="left:1519.20px;top:593.82px;font-size:14px;line-height:14px;letter-spacing:0.296px;">2016-12-13 18:46:44</div>
<div class="t" style="left:1676.10px;top:593.82px;font-size:14px;line-height:14px;letter-spacing:-0.158px;">employee</div>
<div class="t" style="left:76.10px;top:624.50px;font-size:14px;line-height:14px;letter-spacing:0.199px;color:#2e57a0;">INC0000059</div>
<div class="t" style="left:194.00px;top:624.50px;font-size:14px;line-height:14px;letter-spacing:0.296px;">2016-08-10 09:14:29</div>
<div class="t" style="left:350.90px;top:624.50px;font-size:14px;line-height:14px;letter-spacing:-0.216px;">Unable to access team file share</div>
<div class="t" style="left:748.80px;top:624.50px;font-size:14px;line-height:14px;letter-spacing:-0.310px;color:#2e57a0;">Rick Berzle</div>
<div class="t" style="left:923.00px;top:624.50px;font-size:14px;line-height:14px;letter-spacing:0.139px;">3 - Moderate</div>
<div class="t" style="left:1026.20px;top:624.50px;font-size:14px;line-height:14px;letter-spacing:0.429px;">New</div>
<div class="t" style="left:1115.00px;top:624.50px;font-size:14px;line-height:14px;letter-spacing:0.216px;">Inquiry / Help</div>
<div class="t" style="left:1225.30px;top:624.50px;font-size:14px;line-height:14px;letter-spacing:-0.141px;">(empty)</div>
<div class="t" style="left:1392.20px;top:624.50px;font-size:14px;line-height:14px;letter-spacing:-0.141px;">(empty)</div>
<div class="t" style="left:1519.20px;top:624.50px;font-size:14px;line-height:14px;letter-spacing:0.296px;">2016-08-10 09:14:29</div>
<div class="t" style="left:1676.10px;top:624.50px;font-size:14px;line-height:14px;letter-spacing:-0.059px;">admin</div>
<div class="t" style="left:76.10px;top:655.18px;font-size:14px;line-height:14px;letter-spacing:0.199px;color:#2e57a0;">INC0000058</div>
<div class="t" style="left:194.00px;top:655.18px;font-size:14px;line-height:14px;letter-spacing:0.296px;">2016-08-10 09:37:45</div>
<div class="t" style="left:350.90px;top:655.18px;font-size:14px;line-height:14px;letter-spacing:-0.095px;">Performance problems with email</div>
<div class="t" style="left:748.80px;top:655.18px;font-size:14px;line-height:14px;letter-spacing:-0.245px;color:#2e57a0;">Bow Ruggeri</div>
<div class="t" style="left:923.00px;top:655.18px;font-size:14px;line-height:14px;letter-spacing:-0.102px;">5 - Planning</div>
<div class="t" style="left:1026.20px;top:655.18px;font-size:14px;line-height:14px;letter-spacing:0.429px;">New</div>
<div class="t" style="left:1115.00px;top:655.18px;font-size:14px;line-height:14px;letter-spacing:0.216px;">Inquiry / Help</div>
<div class="t" style="left:1225.30px;top:655.18px;font-size:14px;line-height:14px;letter-spacing:-0.141px;">(empty)</div>
<div class="t" style="left:1392.20px;top:655.18px;font-size:14px;line-height:14px;letter-spacing:-0.141px;">(empty)</div>
<div class="t" style="left:1519.20px;top:655.18px;font-size:14px;line-height:14px;letter-spacing:0.296px;">2016-08-10 09:37:45</div>
<div class="t" style="left:1676.10px;top:655.18px;font-size:14px;line-height:14px;letter-spacing:-0.059px;">admin</div>
<div class="t" style="left:76.10px;top:685.86px;font-size:14px;line-height:14px;letter-spacing:0.199px;color:#2e57a0;">INC0000057</div>
<div class="t" style="left:194.00px;top:685.86px;font-size:14px;line-height:14px;letter-spacing:0.296px;">2016-08-10 09:14:59</div>
<div class="t" style="left:350.90px;top:685.86px;font-size:14px;line-height:14px;letter-spacing:0.010px;">Performance problems with wifi</div>
<div class="t" style="left:748.80px;top:685.86px;font-size:14px;line-height:14px;letter-spacing:-0.033px;color:#2e57a0;">Bertie Luby</div>
<div class="t" style="left:923.00px;top:685.86px;font-size:14px;line-height:14px;letter-spacing:-0.102px;">5 - Planning</div>
<div class="t" style="left:1026.20px;top:685.86px;font-size:14px;line-height:14px;letter-spacing:0.429px;">New</div>
<div class="t" style="left:1115.00px;top:685.86px;font-size:14px;line-height:14px;letter-spacing:0.216px;">Inquiry / Help</div>
<div class="t" style="left:1225.30px;top:685.86px;font-size:14px;line-height:14px;letter-spacing:-0.141px;">(empty)</div>
<div class="t" style="left:1392.20px;top:685.86px;font-size:14px;line-height:14px;letter-spacing:-0.141px;">(empty)</div>
<div class="t" style="left:1519.20px;top:685.86px;font-size:14px;line-height:14px;letter-spacing:0.296px;">2016-08-10 09:14:59</div>
<div class="t" style="left:1676.10px;top:685.86px;font-size:14px;line-height:14px;letter-spacing:-0.059px;">admin</div>
<div class="t" style="left:76.10px;top:716.54px;font-size:14px;line-height:14px;letter-spacing:0.199px;color:#2e57a0;">INC0000055</div>
<div class="t" style="left:194.00px;top:716.54px;font-size:14px;line-height:14px;letter-spacing:0.354px;">2025-11-02 20:47:23</div>
<div class="t" style="left:350.90px;top:716.54px;font-size:14px;line-height:14px;letter-spacing:-0.411px;">SAP Sales app is not accessible</div>
<div class="t" style="left:748.80px;top:716.54px;font-size:14px;line-height:14px;letter-spacing:-0.155px;color:#2e57a0;">Carol Coughlin</div>
<div class="b" style="left:923.4px;top:717.94px;width:12.1px;height:12.1px;border-radius:50%;background:#e07a85"></div>
<div class="t" style="left:942.50px;top:716.54px;font-size:14px;line-height:14px;letter-spacing:-0.029px;">1 - Critical</div>
<div class="t" style="left:1026.20px;top:716.54px;font-size:14px;line-height:14px;letter-spacing:-0.358px;">In Progress</div>
<div class="t" style="left:1225.30px;top:716.54px;font-size:14px;line-height:14px;letter-spacing:-0.264px;color:#2e57a0;">Service Desk</div>
<div class="t" style="left:1392.20px;top:716.54px;font-size:14px;line-height:14px;letter-spacing:0.036px;color:#2e57a0;">Beth Anglin</div>
<div class="t" style="left:1519.20px;top:716.54px;font-size:14px;line-height:14px;letter-spacing:0.354px;">2025-11-16 15:08:31</div>
<div class="t" style="left:1676.10px;top:716.54px;font-size:14px;line-height:14px;letter-spacing:-0.059px;">admin</div>
<div class="t" style="left:76.10px;top:747.22px;font-size:14px;line-height:14px;letter-spacing:0.199px;color:#2e57a0;">INC0000054</div>
<div class="t" style="left:194.00px;top:747.22px;font-size:14px;line-height:14px;letter-spacing:0.354px;">2015-11-02 12:49:08</div>
<div class="t" style="left:350.90px;top:747.22px;font-size:14px;line-height:14px;letter-spacing:-0.167px;">SAP Materials Management is slow or there is an outage</div>
<div class="t" style="left:748.80px;top:747.22px;font-size:14px;line-height:14px;letter-spacing:0.152px;color:#2e57a0;">Christen Mitchell</div>
<div class="b" style="left:923.4px;top:748.62px;width:12.1px;height:12.1px;border-radius:50%;background:#e07a85"></div>
<div class="t" style="left:942.50px;top:747.22px;font-size:14px;line-height:14px;letter-spacing:-0.029px;">1 - Critical</div>
<div class="t" style="left:1026.20px;top:747.22px;font-size:14px;line-height:14px;letter-spacing:0.108px;">On Hold</div>
<div class="t" style="left:1115.00px;top:747.22px;font-size:14px;line-height:14px;letter-spacing:0.137px;">Software</div>
<div class="t" style="left:1225.30px;top:747.22px;font-size:14px;line-height:14px;letter-spacing:-0.264px;color:#2e57a0;">Service Desk</div>
<div class="t" style="left:1392.20px;top:747.22px;font-size:14px;line-height:14px;letter-spacing:-0.141px;">(empty)</div>
<div class="t" style="left:1519.20px;top:747.22px;font-size:14px;line-height:14px;letter-spacing:0.354px;">2015-11-24 07:47:36</div>
<div class="t" style="left:1676.10px;top:747.22px;font-size:14px;line-height:14px;letter-spacing:-0.059px;">admin</div>
<div class="b" style="left:0;top:951px;width:1792px;height:1px;background:#d3d5d7"></div>
<svg style="left:756px;top:970px" width="13" height="9" viewBox="0 0 13 9" fill="#c3d0d8"><path d="M0 4.5L6 0v9z"/><path d="M6.5 4.5L12.5 0v9z"/></svg>
<svg style="left:795px;top:970px" width="7" height="9" viewBox="0 0 7 9" fill="#c3d0d8"><path d="M0.5 4.5L6.3 0v9z"/></svg>
<div class="b" style="left:818px;top:958px;width:80px;height:32px;border:1px solid #77797c;border-radius:6px;background:#fff"></div>
<div class="t" style="left:886.00px;top:966.80px;font-size:14px;line-height:14px;letter-spacing:0.000px;color:#111;">1</div>
<div class="t" style="left:902.50px;top:967.00px;font-size:14px;line-height:14px;letter-spacing:0.524px;color:#111;">to 20 of 68</div>
<svg style="left:991px;top:969.5px" width="7" height="9" viewBox="0 0 7 9" fill="#2b5a73"><path d="M0.3 0L6.3 4.5 0.3 9z"/></svg>
<svg style="left:1024px;top:969.5px" width="13" height="9" viewBox="0 0 13 9" fill="#2b5a73"><path d="M0 0l6 4.5L0 9z"/><path d="M6.3 0l6 4.5-6 4.5z"/></svg>
<svg style="left:1762px;top:966px" width="16" height="16" viewBox="0 0 16 16" fill="none" stroke="#27506a" stroke-width="1.25"><circle cx="8" cy="8.6" r="5.4"/><path d="M6.1 1.6h3.8" stroke-width="1.4"/><path d="M8 5.3v4.3" stroke-width="1.6"/></svg>
</body></html>
